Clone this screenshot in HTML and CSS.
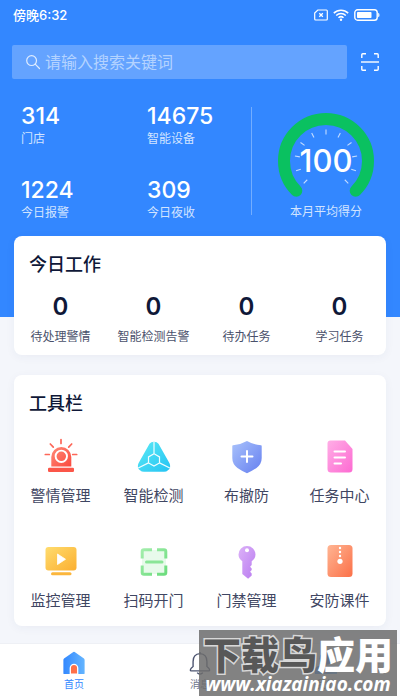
FILE: index.html
```
<!DOCTYPE html>
<html lang="zh-CN">
<head>
<meta charset="utf-8">
<meta name="viewport" content="width=device-width, initial-scale=1">
<title>首页</title>
<link rel="stylesheet" href="styles.css">
</head>
<body>
<svg class="defs" width="0" height="0" aria-hidden="true">
  <defs>
    <linearGradient id="red" x1="0" y1="0" x2="1" y2="1"><stop offset="0" stop-color="#ff8a78"/><stop offset="1" stop-color="#fb4a3e"/></linearGradient>
    <linearGradient id="cyan" x1="0" y1="0" x2="1" y2="1"><stop offset="0" stop-color="#5beaf5"/><stop offset="1" stop-color="#25c3f3"/></linearGradient>
    <linearGradient id="indigo" x1="0" y1="0" x2="1" y2="1"><stop offset="0" stop-color="#a9c2fb"/><stop offset="1" stop-color="#657ff0"/></linearGradient>
    <linearGradient id="pink" x1="0" y1="0" x2="1" y2="1"><stop offset="0" stop-color="#ffaee6"/><stop offset="1" stop-color="#fd6ad2"/></linearGradient>
    <linearGradient id="amber" x1="0" y1="0" x2="1" y2="1"><stop offset="0" stop-color="#ffdc6e"/><stop offset="1" stop-color="#fbaf30"/></linearGradient>
    <linearGradient id="green" gradientUnits="userSpaceOnUse" x1="5" y1="5" x2="31" y2="31"><stop offset="0" stop-color="#a5eeae"/><stop offset="1" stop-color="#6bdc7c"/></linearGradient>
    <linearGradient id="violet" x1="0" y1="0" x2="1" y2="1"><stop offset="0" stop-color="#dcb2f8"/><stop offset="1" stop-color="#b97bf0"/></linearGradient>
    <linearGradient id="orange" x1="0" y1="0" x2="1" y2="1"><stop offset="0" stop-color="#ffb593"/><stop offset="1" stop-color="#fb7048"/></linearGradient>
    <linearGradient id="blue" x1="0" y1="0" x2="1" y2="0"><stop offset="0" stop-color="#3388ff"/><stop offset="1" stop-color="#64b5ff"/></linearGradient>
  </defs>
</svg>

<header class="hero">
  <div class="status">
    <span class="clock">傍晚6:32</span>
    <div class="indicators">
      <svg width="14" height="12" viewBox="0 0 14 12" fill="none" stroke="#fff"><path d="M3.8 1H12.4Q13.3 1 13.3 1.9V10.1Q13.3 11 12.4 11H1.6Q.7 11 .7 10.1V4.1Z" stroke-width="1.2"/><path d="M5.3 4.2l3.5 3.5M8.8 4.2L5.3 7.7" stroke-width="1.3"/></svg>
      <svg width="16" height="12" viewBox="0 0 16 12" fill="none" stroke="#fff" stroke-width="1.5"><path d="M.8 4.1a10.3 10.3 0 0 1 14.4 0M3.2 6.5a6.9 6.9 0 0 1 9.6 0M5.5 8.8a3.6 3.6 0 0 1 5 0"/><circle cx="8" cy="10.7" r="1.2" fill="#fff" stroke="none"/></svg>
      <svg width="26" height="12" viewBox="0 0 26 12"><rect x=".8" y=".8" width="22.4" height="10.4" rx="2.8" fill="none" stroke="#fff" stroke-width="1.4"/><rect x="3" y="3" width="14.5" height="6" rx=".8" fill="#fff"/><path d="M24.2 3.8q1.3.2 1.3 2.2t-1.3 2.2z" fill="#fff"/></svg>
    </div>
  </div>

  <form class="search-row">
    <label class="search">
      <svg width="16" height="16" viewBox="0 0 16 16" fill="none" stroke="#e0edff" stroke-width="1.2"><circle cx="6.6" cy="6.6" r="4.9"/><path d="M10.2 10.2l4.3 4.3" stroke-linecap="round"/></svg>
      <input type="search" placeholder="请输入搜索关键词" aria-label="搜索">
    </label>
    <button class="scan" type="button" aria-label="扫一扫">
      <svg width="18" height="18" viewBox="0 0 18 18" fill="none" stroke="#fff" stroke-width="1.4"><path d="M.8 5V1.8q0-1 1-1H5M13 .8h3.2q1 0 1 1V5M17.2 13v3.2q0 1-1 1H13M5 17.2H1.8q-1 0-1-1V13"/><path d="M0 9h18"/></svg>
    </button>
  </form>

  <section class="overview">
    <dl class="stats">
      <div><dd>314</dd><dt>门店</dt></div>
      <div><dd>14675</dd><dt>智能设备</dt></div>
      <div><dd>1224</dd><dt>今日报警</dt></div>
      <div><dd>309</dd><dt>今日夜收</dt></div>
    </dl>
    <div class="divider"></div>
    <div class="score">
      <div class="gauge">
        <svg width="96" height="96" viewBox="-48 -48 96 96" fill="none">
          <path d="M-29.7 29.7A42 42 0 1 1 29.7 29.7" stroke="#0ac160" stroke-width="12" stroke-linecap="round"/>
          <g stroke="#c4dcff" stroke-width="1.1">
            <path d="M0-31.500v5" transform="rotate(-135)"/><path d="M0-31.500v5" transform="rotate(-108)"/><path d="M0-31.500v5" transform="rotate(-81)"/><path d="M0-31.500v5" transform="rotate(-54)"/><path d="M0-31.500v5" transform="rotate(-27)"/><path d="M0-31.500v5"/><path d="M0-31.500v5" transform="rotate(27)"/><path d="M0-31.500v5" transform="rotate(54)"/><path d="M0-31.500v5" transform="rotate(81)"/><path d="M0-31.500v5" transform="rotate(108)"/><path d="M0-31.500v5" transform="rotate(135)"/>
          </g>
        </svg>
        <strong>100</strong>
      </div>
      <span>本月平均得分</span>
    </div>
  </section>
</header>

<main>
  <section class="card work">
    <h2>今日工作</h2>
    <dl class="grid">
      <div><dd>0</dd><dt>待处理警情</dt></div>
      <div><dd>0</dd><dt>智能检测告警</dt></div>
      <div><dd>0</dd><dt>待办任务</dt></div>
      <div><dd>0</dd><dt>学习任务</dt></div>
    </dl>
  </section>

  <section class="card tools">
    <h2>工具栏</h2>
    <div class="grid">
      <button type="button">
        <svg viewBox="0 0 36 36"><path d="M8.300 28.500V19a10 10 0 0 1 20 0v9.500z" fill="url(#red)"/><circle cx="18.300" cy="18.300" r="5.700" fill="none" stroke="#fff" stroke-width="1.900"/><rect x="5" y="29.700" width="26" height="4.300" rx="1.300" fill="#fb5649"/><path d="M18 1.500v4M7.300 6l3 3.200M28.700 6l-3 3.200M2.300 16.500h4M29.700 16.500h4" stroke="#fd6759" stroke-width="1.700" stroke-linecap="round"/></svg>
        <span>警情管理</span>
      </button>
      <button type="button">
        <svg viewBox="0 0 36 36"><path d="M13.500 5.700Q15 3.700 18 3.700t4.500 2l11 19.500q2 4.500-1.500 7-1.500 1.500-4 1.500H8q-2.500 0-4-1.500-3.500-2.500-1.500-7z" fill="url(#cyan)"/><path d="M18 3.700v12l5.500 3.200v6L18 28l-5.500-3.100v-6l5.500-3.200M12.500 24.900L2.200 30M23.500 24.900L33.800 30" fill="none" stroke="#effdff" stroke-width="1.200"/></svg>
        <span>智能检测</span>
      </button>
      <button type="button">
        <svg viewBox="0 0 36 36"><path d="M18 3q6 3.500 14 4.300.7 0 .7 1V20q0 6-5.200 10Q24 32.500 18 35.300 12 32.500 8.500 30 3.300 26 3.300 20V8.300q0-1 .7-1Q12 6.500 18 3z" fill="url(#indigo)"/><path d="M18 13v11M12.500 18.500h11" stroke="#fff" stroke-width="2" stroke-linecap="round"/></svg>
        <span>布撤防</span>
      </button>
      <button type="button">
        <svg viewBox="0 0 36 36"><path d="M8.500 2.500H23l7.500 8.500v20q0 3.500-3.500 3.500H9q-3.500 0-3.500-3.500V5.500q0-3 3-3z" fill="url(#pink)"/><path d="M12.500 13.500H23M12.500 19.500H23M12.500 25.500h6.500" stroke="#fff" stroke-width="2" stroke-linecap="round"/></svg>
        <span>任务中心</span>
      </button>
      <button type="button">
        <svg viewBox="0 0 36 36"><rect x="2.500" y="4" width="31" height="23.500" rx="3" fill="url(#amber)"/><path d="M14.500 11v10.500l8-5.250z" fill="#fff" stroke="#fff" stroke-width=".8" stroke-linejoin="round"/><rect x="8" y="29.300" width="20.500" height="3" rx="1.500" fill="#fbb63c"/></svg>
        <span>监控管理</span>
      </button>
      <button type="button">
        <svg viewBox="0 0 36 36"><rect x="6" y="7" width="24" height="24" fill="#e8faeb"/><path d="M6.200 15.500V8.500q0-1.800 1.800-1.800h8M21 6.700h7q1.800 0 1.800 1.800v7M29.800 22.500v7q0 1.800-1.800 1.800h-7M16 31.300H8q-1.800 0-1.800-1.800v-7" fill="none" stroke="url(#green)" stroke-width="3"/><rect x="9" y="17.500" width="18.500" height="3" rx="1.500" fill="#8ae597"/></svg>
        <span>扫码开门</span>
      </button>
      <button type="button">
        <svg viewBox="0 0 36 36"><path d="M18 3a8.500 8.500 0 0 1 8.500 8.500q0 4-3.800 6.800V22l-1.600 1.700 1.600 1.800v1.500l-1.600 1.700 1.600 1.800v2l-3.600 3.200-5.800-4.700V18.300Q9.500 15.500 9.500 11.500A8.500 8.500 0 0 1 18 3z" fill="url(#violet)"/><circle cx="18" cy="7.300" r="2" fill="#fff"/></svg>
        <span>门禁管理</span>
      </button>
      <button type="button">
        <svg viewBox="0 0 36 36"><rect x="5.500" y="2" width="25" height="32" rx="3.500" fill="url(#orange)"/><g fill="#fff"><circle cx="18" cy="5" r="1.200"/><circle cx="18" cy="9" r="1.200"/><circle cx="18" cy="13" r="1.200"/><circle cx="18" cy="18.300" r="2.600"/></g></svg>
        <span>安防课件</span>
      </button>
    </div>
  </section>
</main>

<nav class="tabs">
  <a class="active" href="#home">
    <svg width="24" height="24" viewBox="0 0 26 26"><path d="M11.500 1.500q1.500-1.200 3 0l9.300 6.700q.7.600.7 1.600V24q0 1-1 1h-21q-1 0-1-1V9.800q0-1 .7-1.600z" fill="url(#blue)"/><path d="M9 25v-6.500a4 4 0 0 1 8 0V25z" fill="#ff7048" stroke="#fff" stroke-width="1.400"/></svg>
    <span>首页</span>
  </a>
  <a href="#messages">
    <svg width="24" height="24" viewBox="0 0 24 26" fill="none" stroke="#4c5470" stroke-width="1.500"><path d="M12 2.800q-7.500.5-7.500 8.500v5.500Q1.500 19 1.500 20.500q0 1 1 1h19q1 0 1-1 0-1.500-3-3.700v-5.500q0-8-7.500-8.500zM12 2.800V1M9 23.500q1 1.500 3 1.500t3-1.500"/></svg>
    <span>消息</span>
  </a>
  <a href="#me">
    <svg width="24" height="24" viewBox="0 0 24 26"><circle cx="12" cy="8" r="7" fill="#3388ff"/><path d="M0 25v-4q0-5 6-5h12q6 0 6 5v4z" fill="url(#blue)"/><path d="M12 15l2 7-2 2-2-2z" fill="#ff7048"/></svg>
    <span>我的</span>
  </a>
</nav>

<aside class="watermark">
  <p class="brand">下载鸟<b>应用</b></p>
  <p class="site">www.xiazainiao.com</p>
</aside>
</body>
</html>
```

FILE: styles.css
```
* {
  box-sizing: border-box;
}

body {
  position: relative;
  display: flex;
  flex-direction: column;
  min-height: 100vh;
  margin: 0;
  background: #f4f6fb;
  color: #0f1838;
  font-family: Inter, "Noto Sans CJK SC", sans-serif;
  font-size: 12px;
  line-height: 20px;
}

h2, dl, dd, p {
  margin: 0;
}

button {
  padding: 0;
  border: 0;
  background: none;
  color: inherit;
  font: inherit;
}

svg {
  display: block;
}

.defs {
  position: absolute;
}

.hero {
  padding-bottom: 94px;
  background: #3387ff;
  color: #fff;
}

.status {
  display: flex;
  align-items: center;
  justify-content: space-between;
  height: 30px;
  padding: 0 20px 0 13px;
}

.clock {
  font-size: 13px;
  font-weight: 500;
}

.indicators {
  display: flex;
  gap: 5px;
}

.search-row {
  display: flex;
  align-items: center;
  gap: 14px;
  margin-top: 15px;
  padding: 0 21px 0 12px;
}

.search {
  display: flex;
  flex: 1;
  align-items: center;
  gap: 4px;
  height: 34px;
  padding-left: 13px;
  border-radius: 2px;
  background: #64a3ff;
}

.search input {
  flex: 1;
  min-width: 0;
  padding: 0;
  border: 0;
  outline: 0;
  background: none;
  color: #fff;
  font: inherit;
  font-size: 16px;
}

.search input::placeholder {
  color: #b4d3ff;
}

.overview {
  display: flex;
  margin-top: 25px;
  padding-left: 21px;
}

.stats {
  display: grid;
  flex: 230;
  grid-template-columns: 126px 1fr;
  row-gap: 31px;
  margin-top: 2px;
}

.stats div,
.work .grid div {
  display: flex;
  flex-direction: column;
}

.stats dd {
  margin-bottom: 3px;
  font-size: 23px;
  font-weight: 500;
  line-height: 20px;
}

.stats dt,
.score span {
  color: #d2e4ff;
}

.divider {
  width: 1px;
  margin: 3px 0 8px;
  background: #73adff;
}

.score {
  display: flex;
  flex: 148;
  flex-direction: column;
  align-items: center;
  padding-top: 9px;
}

.gauge {
  display: grid;
  place-items: center;
  margin-bottom: -7px;
}

.gauge > * {
  grid-area: 1 / 1;
}

.gauge strong {
  font-size: 31px;
  font-weight: 500;
}

main {
  display: grid;
  gap: 20px;
  margin: -81px 14px 17px;
}

.card {
  border-radius: 8px;
  background: #fff;
  box-shadow: 0 2px 10px rgba(40, 60, 110, 0.05);
}

.card h2 {
  padding: 17px 15px 0;
  font-size: 18px;
  font-weight: 500;
  line-height: 24px;
}

.grid {
  display: grid;
  grid-template-columns: repeat(4, 1fr);
}

.work .grid {
  padding: 18px 0 8px;
  text-align: center;
}

.work dd {
  font-size: 24px;
  font-weight: 600;
  line-height: 24px;
}

.work dt {
  margin-top: 8px;
  color: #4a516b;
}

.tools .grid {
  row-gap: 35px;
  padding: 22px 0 13px;
}

.tools button {
  display: flex;
  flex-direction: column;
  align-items: center;
  gap: 10px;
  color: #3f4662;
  font-size: 15px;
  line-height: 24px;
}

.tools svg {
  width: 36px;
  height: 36px;
}

.tabs {
  display: grid;
  grid-template-columns: repeat(3, 1fr);
  margin-top: auto;
  padding: 7px 11px;
  border-top: 1px solid #eef0f5;
  background: #fff;
}

.tabs a {
  display: flex;
  flex-direction: column;
  align-items: center;
  color: #70768c;
  font-size: 10px;
  line-height: 18px;
  text-decoration: none;
}

.tabs .active {
  color: #3387ff;
}

.watermark {
  position: absolute;
  right: 3px;
  bottom: 4px;
  height: 66px;
  padding: 6px 4px 0;
  background: rgba(108, 108, 108, 0.85);
  color: #fff;
  text-align: center;
  white-space: nowrap;
}

.brand {
  color: #585858;
  font-size: 38px;
  font-weight: 900;
  line-height: 38px;
  -webkit-text-stroke: 3px #d8d8d8;
  paint-order: stroke fill;
}

.brand b {
  color: #fff;
  font-weight: 900;
  -webkit-text-stroke: 0;
}

.site {
  font-family: "Open Sans", sans-serif;
  font-size: 19px;
  font-style: italic;
  font-weight: 700;
  line-height: 20px;
}
```
